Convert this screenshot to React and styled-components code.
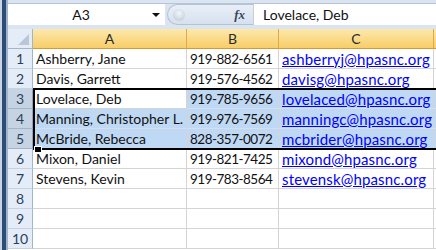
import React from "react";
import styled, { createGlobalStyle } from "styled-components";

const Global = createGlobalStyle`
  html, body { margin: 0; padding: 0; background: #fff; }
  body { width: 436px; height: 250px; overflow: hidden; font-family: Lato, "Open Sans", sans-serif; }
`;

const Frame = styled.div`
  display: flex;
  width: 436px;
  height: 250px;
  overflow: hidden;
`;

const SideStrip = styled.div`
  width: 8px;
  flex: none;
  background: linear-gradient(to right, #c9d5e4 0 2px, #2d4c76 2px 6px, #9fb3cc 6px 8px);
`;

const Main = styled.div`
  flex: 1;
  display: flex;
  flex-direction: column;
  min-width: 0;
  overflow: hidden;
`;

const Band = styled.div`
  height: ${(p) => p.h}px;
  flex: none;
  background: #dbe5f1;
  border-bottom: ${(p) => (p.line ? "1px solid #b6c4d6" : "none")};
  box-sizing: border-box;
`;

const FormulaRow = styled.div`
  display: flex;
  height: 21px;
  flex: none;
  background: #dbe5f1;
`;

const NameBox = styled.div`
  width: 157px;
  display: flex;
  align-items: center;
  background: #fff;
  font-size: 14px;
  color: #111;
`;

const NameText = styled.span`
  flex: 1;
  text-align: center;
  padding-left: 2px;
`;

const DropArrow = styled.span`
  width: 0;
  height: 0;
  border-left: 4px solid transparent;
  border-right: 4px solid transparent;
  border-top: 4px solid #111;
  margin-right: 5px;
`;

const Pill = styled.div`
  width: 86px;
  margin-left: 2px;
  display: flex;
  align-items: center;
  background: linear-gradient(#e9eff7, #d6e1ee);
  border-radius: 11px 0 0 11px;
  border: 1px solid #b3c3d6;
  border-right: none;
  box-sizing: border-box;
`;

const Knob = styled.span`
  width: 12px;
  height: 12px;
  border-radius: 50%;
  margin-left: 5px;
  background: radial-gradient(circle at 50% 35%, #f3f6fa, #b9c5d4);
`;

const Fx = styled.span`
  margin-left: auto;
  margin-right: 8px;
  font-family: "Liberation Serif", serif;
  font-style: italic;
  font-weight: bold;
  font-size: 13px;
  color: #39465a;
`;

const FormulaInput = styled.div`
  flex: 1;
  background: #fff;
  display: flex;
  align-items: center;
  padding-left: 9px;
  font-size: 14px;
  color: #111;
  border-left: 1px solid #c3cfdd;
`;

const Sheet = styled.div`
  position: relative;
  display: grid;
  grid-template-columns: 25px 154px 92px 155px 1fr;
  grid-auto-rows: 20px;
  grid-template-rows: 20px;
`;

const Corner = styled.div`
  position: relative;
  background: #e4ecf7;
  border-right: 1px solid #9eb6ce;
  border-bottom: 1px solid #9eb6ce;
  box-sizing: border-box;
  &::after {
    content: "";
    position: absolute;
    right: 3px;
    bottom: 3px;
    border-left: 11px solid transparent;
    border-bottom: 11px solid #b8c6d8;
  }
`;

const ColHead = styled.div`
  display: flex;
  align-items: center;
  justify-content: center;
  background: linear-gradient(#fde9ad, #f7cd68);
  border-right: 1px solid #e0a94a;
  border-bottom: 1px solid #d49a3a;
  box-sizing: border-box;
  font-size: 14px;
  color: #2a2a2a;
`;

const RowHead = styled.div`
  display: flex;
  align-items: center;
  justify-content: center;
  background: ${(p) => (p.sel ? "#c6d3e3" : "#e4ecf7")};
  border-right: 1px solid ${(p) => (p.sel ? "#8ea3bd" : "#9eb6ce")};
  border-bottom: 1px solid ${(p) => (p.sel ? "#a3b5cb" : "#c5d3e3")};
  box-sizing: border-box;
  font-size: 14px;
  color: #2b3f5c;
`;

const Cell = styled.div`
  display: flex;
  align-items: center;
  padding-left: 3px;
  background: ${(p) => (p.sel ? "#bfd8f4" : "#fff")};
  border-right: 1px solid #d4d4d4;
  border-bottom: 1px solid ${(p) => (p.sel ? "#d4dff0" : "#d4d4d4")};
  box-sizing: border-box;
  font-size: ${(p) => p.size || 14}px;
  letter-spacing: ${(p) => p.track || 0}px;
  color: ${(p) => (p.link ? "#0000ff" : "#111")};
  text-decoration: ${(p) => (p.link ? "underline" : "none")};
  white-space: nowrap;
  overflow: hidden;
`;

const SelectionBox = styled.div`
  position: absolute;
  left: 25px;
  top: 59px;
  width: 440px;
  height: 62px;
  border: 2px solid #000;
  box-sizing: border-box;
  pointer-events: none;
`;

const FillHandle = styled.div`
  position: absolute;
  left: 26px;
  top: 117px;
  width: 6px;
  height: 5px;
  background: #000;
  border: 1px solid #fff;
`;

const people = [
  ["Ashberry, Jane", "919-882-6561", "ashberryj@hpasnc.org"],
  ["Davis, Garrett", "919-576-4562", "davisg@hpasnc.org"],
  ["Lovelace, Deb", "919-785-9656", "lovelaced@hpasnc.org"],
  ["Manning, Christopher L.", "919-976-7569", "manningc@hpasnc.org"],
  ["McBride, Rebecca", "828-357-0072", "mcbrider@hpasnc.org"],
  ["Mixon, Daniel", "919-821-7425", "mixond@hpasnc.org"],
  ["Stevens, Kevin", "919-783-8564", "stevensk@hpasnc.org"],
];

const rows = Array.from({ length: 10 }, (_, i) => people[i] || ["", "", ""]);

export default function App() {
  return (
    <>
      <Global />
      <Frame>
        <SideStrip />
        <Main>
          <Band h={4} line />
          <FormulaRow>
            <NameBox>
              <NameText>A3</NameText>
              <DropArrow />
            </NameBox>
            <Pill>
              <Knob />
              <Fx>fx</Fx>
            </Pill>
            <FormulaInput>Lovelace, Deb</FormulaInput>
          </FormulaRow>
          <Band h={4} />
          <Sheet>
            <Corner />
            <ColHead>A</ColHead>
            <ColHead>B</ColHead>
            <ColHead>C</ColHead>
            <ColHead />
            {rows.map((r, i) => {
              const sel = i >= 2 && i <= 4;
              return (
                <React.Fragment key={i}>
                  <RowHead sel={sel}>{i + 1}</RowHead>
                  <Cell sel={sel && i !== 2}>{r[0]}</Cell>
                  <Cell sel={sel} size={13.5} track={-0.5}>{r[1]}</Cell>
                  <Cell sel={sel} link size={15} track={0.15}>{r[2]}</Cell>
                  <Cell sel={sel} />
                </React.Fragment>
              );
            })}
            <SelectionBox />
            <FillHandle />
          </Sheet>
        </Main>
      </Frame>
    </>
  );
}
